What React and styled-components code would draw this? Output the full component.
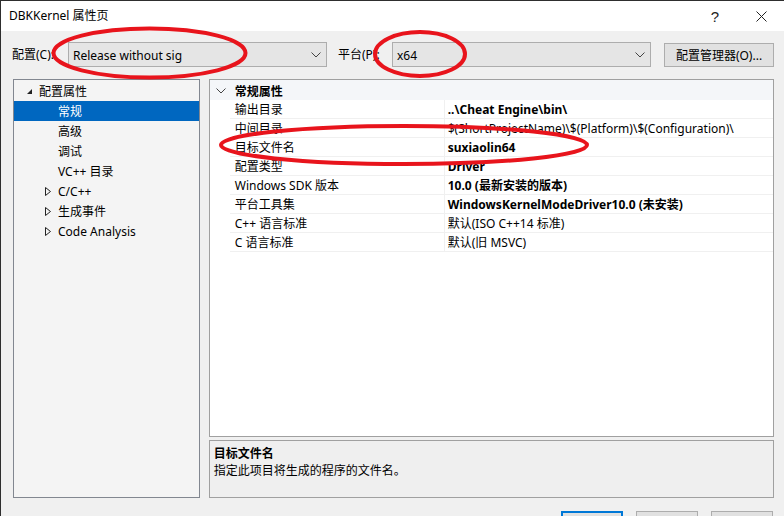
import React from 'react';
import styled, { createGlobalStyle } from 'styled-components';

const GlobalStyle = createGlobalStyle`
    html, body {
        margin: 0;
        padding: 0;
        background: #f0f0f0;
    }
    * {
        box-sizing: border-box;
    }
`

const FONT = `"Noto Sans", "Noto Sans CJK SC", sans-serif`;

const Window = styled.div`
    position: relative;
    width: 784px;
    height: 516px;
    overflow: hidden;
    display: flex;
    flex-direction: column;
    background: #f0f0f0;
    border-top: 1px solid #2e2e2e;
    border-left: 1px solid #2e2e2e;
    font-family: ${FONT};
    font-size: 12px;
    color: #000;
`

const TitleBar = styled.div`
    display: flex;
    align-items: center;
    height: 30px;
    flex-shrink: 0;
    background: #fff;
    padding-left: 8px;
`

const TitleText = styled.div`
    flex: 1;
    font-size: 12px;
    line-height: 16px;
`

const TitleButton = styled.div`
    width: ${props => props.w}px;
    height: 30px;
    display: flex;
    align-items: center;
    justify-content: center;
    font-size: 15px;
    font-family: "Liberation Sans", sans-serif;
    color: #222;
`

const Body = styled.div`
    flex: 1;
    display: flex;
    flex-direction: column;
    padding: 11px 10px 0 11px;
`

const TopRow = styled.div`
    display: flex;
    align-items: center;
    height: 25px;
`

const Label = styled.div`
    width: ${props => props.w}px;
    margin-left: ${props => props.ml || 0}px;
    white-space: nowrap;
    line-height: 25px;
`

const Combo = styled.div`
    width: 259px;
    height: 25px;
    display: flex;
    align-items: center;
    justify-content: space-between;
    padding: 1px 5px 0 4px;
    background: #e5e5e5;
    border: 1px solid #adadad;
`

const Button = styled.div`
    width: ${props => props.w}px;
    height: ${props => props.h || 24}px;
    margin-left: ${props => props.ml || 0}px;
    display: flex;
    align-items: center;
    justify-content: center;
    background: #e1e1e1;
    border: ${props => props.primary ? '2px solid #0078d7' : '1px solid #adadad'};
    white-space: nowrap;
    flex-shrink: 0;
`

const Main = styled.div`
    display: flex;
    margin-top: 12px;
    margin-left: 1px;
    height: 419px;
    gap: 9px;
`

const TreePanel = styled.div`
    width: 187px;
    background: #f4f4f4;
    border: 1px solid #828790;
    padding-top: 1px;
`

const TreeRow = styled.div`
    display: flex;
    align-items: center;
    height: 20px;
    padding-left: ${props => props.indent}px;
    background: ${props => props.selected ? '#0067c0' : 'transparent'};
    color: ${props => props.selected ? '#fff' : '#000'};
    white-space: nowrap;
`

const Arrow = styled.span`
    width: 13px;
    display: inline-flex;
    align-items: center;
`

const RightColumn = styled.div`
    width: 566px;
    display: flex;
    flex-direction: column;
    gap: 3px;
`

const Grid = styled.div`
    height: 358px;
    background: #fff;
    border: 1px solid #a0a0a0;
`

const HeaderRow = styled.div`
    display: flex;
    align-items: center;
    height: 20px;
    padding-top: 2px;
    background: #f4f6f9;
    font-weight: bold;
`

const HeaderText = styled.span`
    padding-left: 5px;
`

const Gutter = styled.div`
    width: 20px;
    display: flex;
    align-items: center;
    justify-content: center;
    padding-left: 2px;
    flex-shrink: 0;
`

const PropRow = styled.div`
    display: flex;
    height: 19px;
`

const NameCell = styled.div`
    width: 215px;
    padding: 2px 0 0 5px;
    line-height: 16px;
    border-bottom: 1px solid #f0f0f0;
    border-right: 1px solid #f0f0f0;
    white-space: nowrap;
`

const ValueCell = styled.div`
    flex: 1;
    padding: 2px 0 0 3px;
    line-height: 16px;
    border-bottom: 1px solid #f0f0f0;
    font-weight: ${props => props.bold ? 'bold' : 'normal'};
    white-space: nowrap;
    overflow: hidden;
`

const Description = styled.div`
    height: 58px;
    background: #efefef;
    border: 1px solid #a0a0a0;
    padding: 4px 4px;
    line-height: 17px;
`

const DescTitle = styled.div`
    font-weight: bold;
`

const ButtonRow = styled.div`
    display: flex;
    justify-content: flex-end;
    margin-top: 13px;
    margin-right: 1px;
    gap: 13px;
`

const Marks = styled.svg`
    position: absolute;
    left: -1px;
    top: -1px;
    pointer-events: none;
`

const Chevron = () => (
    <svg width="10" height="6" viewBox="0 0 10 6">
        <polyline points="0.5,0.5 5,5 9.5,0.5" fill="none" stroke="#444" strokeWidth="1" />
    </svg>
)

const Expanded = () => (
    <svg width="7" height="7" viewBox="0 0 7 7">
        <polygon points="6,1 6,6 1,6" fill="#222" />
    </svg>
)

const Collapsed = () => (
    <svg width="6" height="9" viewBox="0 0 6 9">
        <polygon points="0.5,0.5 5.5,4.5 0.5,8.5" fill="none" stroke="#222" strokeWidth="1" />
    </svg>
)

const rows = [
    { name: '输出目录', value: '..\\Cheat Engine\\bin\\', bold: true },
    { name: '中间目录', value: '$(ShortProjectName)\\$(Platform)\\$(Configuration)\\' },
    { name: '目标文件名', value: 'suxiaolin64', bold: true },
    { name: '配置类型', value: 'Driver', bold: true },
    { name: 'Windows SDK 版本', value: '10.0 (最新安装的版本)', bold: true },
    { name: '平台工具集', value: 'WindowsKernelModeDriver10.0 (未安装)', bold: true },
    { name: 'C++ 语言标准', value: '默认(ISO C++14 标准)' },
    { name: 'C 语言标准', value: '默认(旧 MSVC)' },
];

const tree = [
    { label: '配置属性', indent: 12, arrow: 'open' },
    { label: '常规', indent: 44, selected: true },
    { label: '高级', indent: 44 },
    { label: '调试', indent: 44 },
    { label: 'VC++ 目录', indent: 44 },
    { label: 'C/C++', indent: 31, arrow: 'closed' },
    { label: '生成事件', indent: 31, arrow: 'closed' },
    { label: 'Code Analysis', indent: 31, arrow: 'closed' },
];

const App = () => {
    return (
        <Window>
            <GlobalStyle />
            <TitleBar>
                <TitleText>DBKKernel 属性页</TitleText>
                <TitleButton w={46}>?</TitleButton>
                <TitleButton w={46}>
                    <svg width="11" height="11" viewBox="0 0 11 11">
                        <path d="M0.5 0.5 L10.5 10.5 M10.5 0.5 L0.5 10.5" stroke="#222" strokeWidth="1" />
                    </svg>
                </TitleButton>
            </TitleBar>
            <Body>
                <TopRow>
                    <Label w={56}>配置(C):</Label>
                    <Combo>
                        <span>Release without sig</span>
                        <Chevron />
                    </Combo>
                    <Label w={54} ml={11}>平台(P):</Label>
                    <Combo>
                        <span>x64</span>
                        <Chevron />
                    </Combo>
                    <Button w={110} ml={13}>配置管理器(O)...</Button>
                </TopRow>
                <Main>
                    <TreePanel>
                        {tree.map(item => (
                            <TreeRow key={item.label} indent={item.indent} selected={item.selected}>
                                {item.arrow && (
                                    <Arrow>{item.arrow === 'open' ? <Expanded /> : <Collapsed />}</Arrow>
                                )}
                                {item.label}
                            </TreeRow>
                        ))}
                    </TreePanel>
                    <RightColumn>
                        <Grid>
                            <HeaderRow>
                                <Gutter><Chevron /></Gutter>
                                <HeaderText>常规属性</HeaderText>
                            </HeaderRow>
                            {rows.map(row => (
                                <PropRow key={row.name}>
                                    <Gutter />
                                    <NameCell>{row.name}</NameCell>
                                    <ValueCell bold={row.bold}>{row.value}</ValueCell>
                                </PropRow>
                            ))}
                        </Grid>
                        <Description>
                            <DescTitle>目标文件名</DescTitle>
                            <div>指定此项目将生成的程序的文件名。</div>
                        </Description>
                    </RightColumn>
                </Main>
                <ButtonRow>
                    <Button w={62} h={24} primary />
                    <Button w={62} h={24} />
                    <Button w={62} h={24} />
                </ButtonRow>
            </Body>
            <Marks width="784" height="516" viewBox="0 0 784 516">
                <ellipse cx="149.5" cy="53" rx="96" ry="24.5" fill="none" stroke="#e8141c" strokeWidth="4" />
                <ellipse cx="420" cy="54" rx="45" ry="22" fill="none" stroke="#e8141c" strokeWidth="4" />
                <ellipse cx="404" cy="145" rx="183" ry="19" fill="none" stroke="#e8141c" strokeWidth="4" />
            </Marks>
        </Window>
    )
}

export default App;
